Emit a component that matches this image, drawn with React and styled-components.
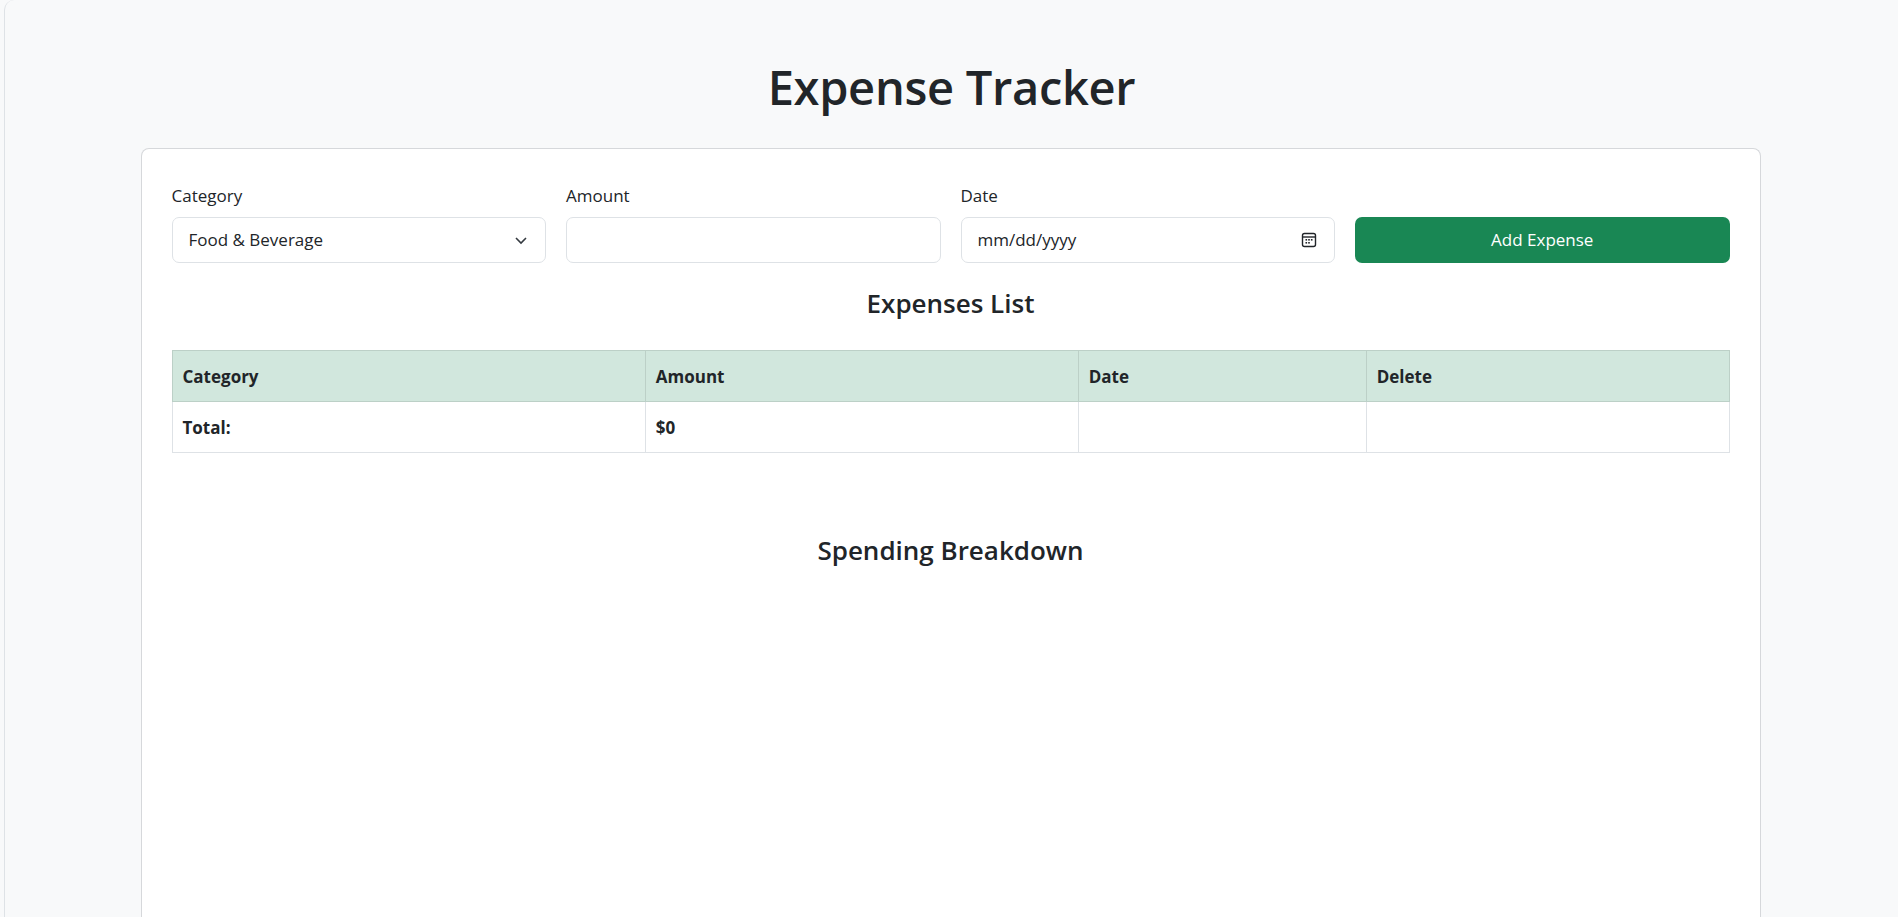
import React from "react";
import styled, { createGlobalStyle } from "styled-components";

const Global = createGlobalStyle`
  html, body { margin: 0; padding: 0; background: #f8f9fa; }
  body { font-family: "Open Sans", "Noto Sans", sans-serif; color: #212529; }
  * { box-sizing: border-box; }
`;

const Page = styled.div`
  height: 917px;
  overflow: hidden;
  margin-left: 4px;
  border-left: 1px solid #dee2e6;
  border-top-left-radius: 10px;
  background: #f8f9fa;
  display: flex;
  flex-direction: column;
  align-items: center;
`;

const Title = styled.h1`
  margin: 59px 0 33px;
  font-size: 47px;
  font-weight: 600;
  line-height: 1.2;
  letter-spacing: -0.3px;
`;

const Card = styled.div`
  width: 1620px;
  margin-left: -2px;
  flex: 1;
  background: #fff;
  border: 1px solid #d6d8db;
  border-bottom: none;
  border-radius: 8px 8px 0 0;
  padding: 34px 30px;
`;

const FormRow = styled.div`
  display: grid;
  grid-template-columns: repeat(4, 1fr);
  gap: 20px;
  align-items: end;
`;

const Field = styled.div`
  display: flex;
  flex-direction: column;
  gap: 8px;
`;

const Label = styled.label`
  font-size: 17px;
  line-height: 1.5;
`;

const Control = styled.div`
  height: 46px;
  border: 1px solid #dee2e6;
  border-radius: 7px;
  display: flex;
  align-items: center;
  justify-content: space-between;
  padding: 0 16px;
  font-size: 17px;
  color: #212529;
`;

const Button = styled.button`
  height: 46px;
  border: none;
  border-radius: 7px;
  background: #198754;
  color: #fff;
  font-family: inherit;
  font-size: 17px;
`;

const SectionTitle = styled.h3`
  text-align: center;
  margin: ${p => p.$top}px 0 ${p => p.$bottom}px;
  font-size: 26px;
  font-weight: 600;
  line-height: 1.2;
`;

const Table = styled.table`
  width: 100%;
  border-collapse: collapse;
  font-size: 17px;
  td, th { border: 1px solid #dee2e6; height: 51px; padding: 0 10px; text-align: left; font-weight: 700; }
  th { background: #d1e7dd; border-color: #bcd0c7; }
`;

export default function App() {
  return (
    <>
      <Global />
      <Page>
        <Title>Expense Tracker</Title>
        <Card>
          <FormRow>
            <Field>
              <Label>Category</Label>
              <Control>
                Food &amp; Beverage
                <svg width="16" height="16" viewBox="0 0 16 16" fill="none" stroke="#343a40" strokeWidth="1.6"><path d="M3 6l5 5 5-5" /></svg>
              </Control>
            </Field>
            <Field>
              <Label>Amount</Label>
              <Control />
            </Field>
            <Field>
              <Label>Date</Label>
              <Control>
                mm/dd/yyyy
                <svg width="18" height="18" viewBox="0 0 18 18" fill="none" stroke="#212529" strokeWidth="1.4">
                  <rect x="2.5" y="2.5" width="13" height="13" rx="2" />
                  <path d="M2.5 6h13" />
                  <g fill="#212529" stroke="none">
                    <rect x="5.5" y="8" width="1.6" height="1.6" /><rect x="8.2" y="8" width="1.6" height="1.6" /><rect x="10.9" y="8" width="1.6" height="1.6" />
                    <rect x="5.5" y="11" width="1.6" height="1.6" /><rect x="8.2" y="11" width="1.6" height="1.6" />
                  </g>
                </svg>
              </Control>
            </Field>
            <Button>Add Expense</Button>
          </FormRow>
          <SectionTitle $top={25} $bottom={31}>Expenses List</SectionTitle>
          <Table>
            <colgroup>
              <col style={{ width: "30.4%" }} />
              <col style={{ width: "27.8%" }} />
              <col style={{ width: "18.5%" }} />
              <col />
            </colgroup>
            <thead>
              <tr><th>Category</th><th>Amount</th><th>Date</th><th>Delete</th></tr>
            </thead>
            <tbody>
              <tr><td>Total:</td><td>$0</td><td></td><td></td></tr>
            </tbody>
          </Table>
          <SectionTitle $top={82} $bottom={0}>Spending Breakdown</SectionTitle>
        </Card>
      </Page>
    </>
  );
}
